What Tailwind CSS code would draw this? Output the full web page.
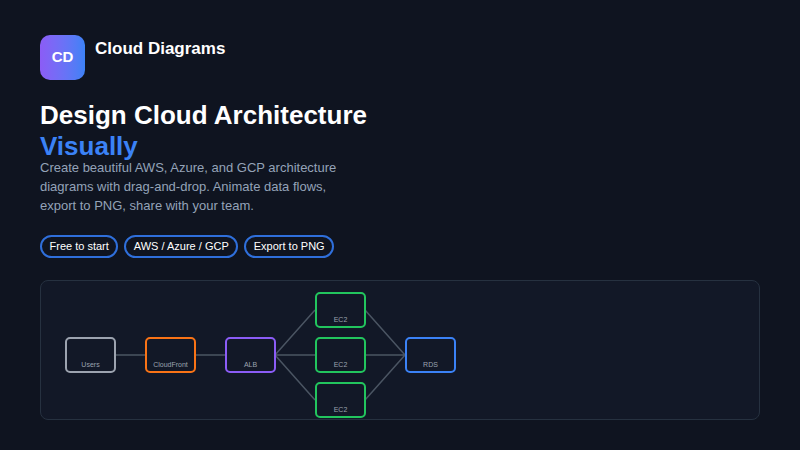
<!DOCTYPE html>
<html lang="en">
<head>
    <meta charset="UTF-8">
    <title>Cloud Diagrams</title>
    <script src="https://cdn.jsdelivr.net/npm/@tailwindcss/browser@4"></script>
</head>
<body class="w-[800px] h-[450px] overflow-hidden bg-[#0f1420] font-['Liberation_Sans',sans-serif]">
    <div class="px-10 pt-[35px]">
        <div class="flex gap-[10px]">
            <div class="w-[45px] h-[45px] rounded-[10px] bg-gradient-to-r from-[#8b5cf6] to-[#3b82f6] flex items-center justify-center text-white text-[15px] font-bold">CD</div>
            <div class="text-white text-[17px] font-bold leading-[28px]">Cloud Diagrams</div>
        </div>

        <h1 class="mt-5 text-white text-[26px] font-bold leading-[31px]">Design Cloud Architecture<br><span class="text-[#3b82f6]">Visually</span></h1>
        <p class="-mt-1 w-[320px] text-[#94a3b8] text-[13px] leading-[19px]">Create beautiful AWS, Azure, and GCP architecture diagrams with drag-and-drop. Animate data flows, export to PNG, share with your team.</p>

        <div class="mt-5 flex gap-[6px]">
            <span class="h-[23px] px-[7.5px] flex items-center rounded-full border-2 border-[#2f6fdb] text-white text-[11px]">Free to start</span>
            <span class="h-[23px] px-[7.5px] flex items-center rounded-full border-2 border-[#2f6fdb] text-white text-[11px]">AWS / Azure / GCP</span>
            <span class="h-[23px] px-[7.5px] flex items-center rounded-full border-2 border-[#2f6fdb] text-white text-[11px]">Export to PNG</span>
        </div>

        <!-- diagram -->
        <div class="relative mt-[22px] w-[720px] h-[140px] rounded-lg border border-[#263140] bg-[#121827]">
            <svg class="absolute left-[-1px] top-[-1px]" width="720" height="140" fill="none" stroke="#4b5563" stroke-width="1.5">
                <path d="M75 75H105M155 75H185M235 75H275M235 75L275 30M235 75L275 120M325 30L365 75M325 75H365M325 120L365 75"></path>
            </svg>
            <div class="absolute left-[24px] top-[56px] w-[51px] h-[36px] rounded-[5px] border-2 border-[#9ca3af] text-[#9ca3af] text-[7px] flex items-end justify-center pb-[1px]">Users</div>
            <div class="absolute left-[104px] top-[56px] w-[51px] h-[36px] rounded-[5px] border-2 border-[#f97316] text-[#9ca3af] text-[7px] flex items-end justify-center pb-[1px]">CloudFront</div>
            <div class="absolute left-[184px] top-[56px] w-[51px] h-[36px] rounded-[5px] border-2 border-[#8b5cf6] text-[#9ca3af] text-[7px] flex items-end justify-center pb-[1px]">ALB</div>
            <div class="absolute left-[274px] top-[11px] w-[51px] h-[36px] rounded-[5px] border-2 border-[#22c55e] text-[#9ca3af] text-[7px] flex items-end justify-center pb-[1px]">EC2</div>
            <div class="absolute left-[274px] top-[56px] w-[51px] h-[36px] rounded-[5px] border-2 border-[#22c55e] text-[#9ca3af] text-[7px] flex items-end justify-center pb-[1px]">EC2</div>
            <div class="absolute left-[274px] top-[101px] w-[51px] h-[36px] rounded-[5px] border-2 border-[#22c55e] text-[#9ca3af] text-[7px] flex items-end justify-center pb-[1px]">EC2</div>
            <div class="absolute left-[364px] top-[56px] w-[51px] h-[36px] rounded-[5px] border-2 border-[#3b82f6] text-[#9ca3af] text-[7px] flex items-end justify-center pb-[1px]">RDS</div>
        </div>
    </div>
</body>
</html>
